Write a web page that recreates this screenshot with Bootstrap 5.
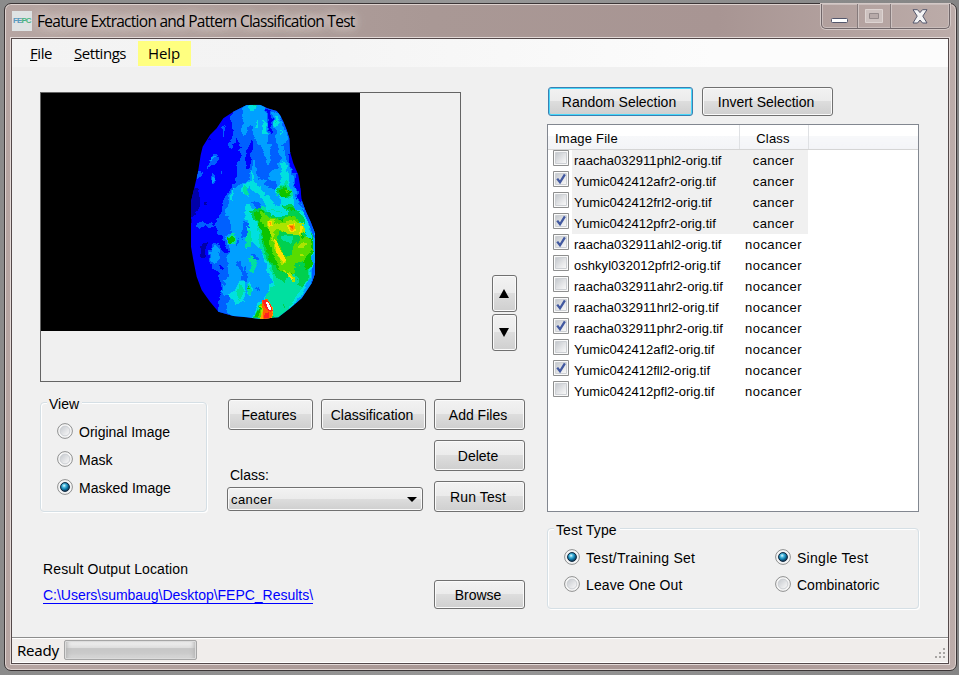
<!DOCTYPE html>
<html lang="en">
<head>
<meta charset="utf-8">
<title>Feature Extraction and Pattern Classification Test</title>
<link rel="stylesheet" href="https://cdn.jsdelivr.net/npm/bootstrap@5.3.0/dist/css/bootstrap.min.css">
<style>
html,body{height:100%}
body{background:linear-gradient(90deg,#8b8b8b,#979797 50%,#858585);font:14px/16px "Liberation Sans",Arial,sans-serif;color:#000;padding:3px 2px 4px 4px;overflow:hidden}
svg{display:block}
.win{height:668px;width:953px;border:1px solid #3b3536;border-radius:7px;box-shadow:inset 0 0 0 1px #ddd2cf;background:linear-gradient(90deg,#b6a5a2,#a99895 45%,#a89593 75%,#bcaca9)}
.segoe{font-family:"Noto Sans","Open Sans",sans-serif}
.titlebar{height:34px;padding:0 6px 0 7px}
.logo{width:20px;height:20px;background:#dfe3e4;color:#5898bd;font:700 8px/20px "Liberation Sans",Arial,sans-serif;letter-spacing:-.9px;padding-left:1px;white-space:nowrap}
.logo b{color:#44b37f}
.titletext{font-family:"Open Sans","Noto Sans",sans-serif;font-size:15.5px;letter-spacing:-.73px;margin-left:5px;padding-bottom:1px;white-space:nowrap;text-shadow:0 0 8px #e0d6d4,0 0 10px #e0d6d4,0 0 14px #d8cdca}
.caption{width:129px;height:25px;border:1px solid #71676a;border-top:0;border-radius:0 0 5px 5px;box-shadow:0 0 0 1px #d3c8c6,inset 0 0 0 1px #c9bdbb;margin-right:0}
.caption>div{height:24px;display:flex;align-items:center;justify-content:center}
.caption>div+div{border-left:1px solid #857a7b;box-shadow:inset 1px 0 #cfc4c2}
.client{margin:0 7px 0 6px;width:938px;height:626px;border:1px solid #54494a;box-shadow:0 0 0 1px #e3d9d7;background:#f0f0f0}
.menu{height:28px;font-family:"Open Sans","Noto Sans",sans-serif;font-size:15px;background:linear-gradient(90deg,#f3f3f3,#f4f4f4 30%,#fcfcfc 75%);padding-left:18px}
.menu a{color:#000;text-decoration:none;height:25px;line-height:25px;margin-top:2px;letter-spacing:-.45px}
.menu .m-file{width:44px}
.menu .m-set{width:64px}
.menu .hot{background:#ffff80;width:53px;padding-left:10px;letter-spacing:-.1px}
.body-area{height:570px;padding-left:28px;gap:22px}
.leftcol{width:485px;padding-top:25px}
.rightcol{width:372px;padding-top:20px}
.preview{width:421px;height:290px;border:1px solid #646464}
.arrows{margin:183px 0 0 31px;gap:2px}
.wbtn{--bs-btn-padding-x:0;--bs-btn-padding-y:0;border:1px solid #707070;border-radius:3px;background:linear-gradient(#f2f2f2,#ebebeb 49%,#dddddd 50%,#cfcfcf);box-shadow:inset 0 0 0 1px #fafafa;font-size:14px;line-height:16px;color:#000;height:31px;display:flex;align-items:center;justify-content:center;padding-right:3px;white-space:nowrap}
.wbtn:hover{color:#000}
.wbtn.focus-blue{border-color:#3c7fb1;box-shadow:inset 0 0 0 1px #48d8fb}
.wbtn.arrow{width:25px;height:37px;padding-right:1px}
.w91{width:91px}.w85{width:85px}.w105{width:105px}
.loose{letter-spacing:.12px}
.grp{border:1px solid #d5dfe5;border-radius:4px;box-shadow:1px 1px 0 #fff,inset 1px 1px 0 #fff}
.grp-title{display:table;background:#f0f0f0;line-height:16px;padding:0 3px 0 2px}
.opt{display:flex;align-items:center;gap:6px;white-space:nowrap;height:20px}
.opt svg{margin-top:-2px}
.combo{width:196px;height:24px;border:1px solid #707070;border-radius:3px;background:linear-gradient(#f2f2f2,#ebebeb 49%,#dddddd 50%,#cfcfcf);box-shadow:inset 0 0 0 1px #fafafa;padding:1px 5px 0 3px;font-size:13px;letter-spacing:.4px}
.filelist{height:388px;background:#fff;border:1px solid #828790}
.filelist table{table-layout:fixed;width:370px;font-size:13px;line-height:19px;border-collapse:collapse}
.filelist th{height:24px;padding:4px 0 0 7px;font-weight:400;border-right:1px solid #dfe1e4;border-bottom:1px solid #d5d5d5;background:linear-gradient(#fff 45%,#f7f8fa 46%,#f3f4f7);letter-spacing:.22px}
.filelist th:last-child{border-right:0}
.filelist td{height:21px;padding:1px 0 0 0;white-space:nowrap;letter-spacing:.04px}
.filelist td.cls,.filelist th.cls{text-align:center;padding-left:0}
.filelist th.cls{padding-right:1px}
.filelist td.cls{letter-spacing:.42px}
.filelist tr.sel td:nth-child(2),.filelist tr.sel td:nth-child(3){background:#f0f0f0}
.filelist td.chk{padding:0 0 5px 5px;vertical-align:middle}
.filelist td.nm{padding-left:2px}
.out-link{color:#00f;text-decoration:none;border-bottom:1px solid #00f;line-height:15px;letter-spacing:-.02px}
.status{height:26px;border-top:1px solid #8d8d8d;box-shadow:inset 0 1px #fff,inset 0 -1px #fff;background:#f0edeb;padding:0 1px 1px 5px;font-size:15px;letter-spacing:-.25px}
.pbar{width:133px;height:20px;border:1px solid #a5a5a5;border-radius:2px;background:linear-gradient(#f3f3f3,#dedede 38%,#c6c6c6 42%,#cbcbcb 70%,#dcdcdc);box-shadow:inset 0 0 0 1px #dcdcdc,inset 4px 0 4px -2px #b2b2b2,inset -4px 0 4px -2px #b2b2b2}
</style>
<script src="https://cdn.jsdelivr.net/npm/bootstrap@5.3.0/dist/js/bootstrap.bundle.min.js"></script>
</head>
<body>
<svg width="0" height="0" class="position-absolute">
 <defs>
  <linearGradient id="off" x1="0" y1="0" x2="1" y2="1"><stop offset="0" stop-color="#c3c7cc"/><stop offset=".6" stop-color="#e6e7e9"/><stop offset="1" stop-color="#fafafa"/></linearGradient>
  <radialGradient id="ball" cx=".4" cy=".35" r=".65"><stop offset="0" stop-color="#e8fbff"/><stop offset=".3" stop-color="#4ebce0"/><stop offset=".65" stop-color="#0d78a8"/><stop offset="1" stop-color="#123350"/></radialGradient>
  <symbol id="r0" viewBox="0 0 16 16"><circle cx="8" cy="8" r="7.4" fill="#f7f7f7" stroke="#8e8f8f"/><circle cx="8" cy="8" r="4.9" fill="url(#off)" stroke="#cdd0d4"/></symbol>
  <symbol id="r1" viewBox="0 0 16 16"><circle cx="8" cy="8" r="7.4" fill="#f7f7f7" stroke="#8e8f8f"/><circle cx="8" cy="8" r="5.3" fill="#c6d2da"/><circle cx="8" cy="8" r="4.4" fill="url(#ball)" stroke="#12293f"/></symbol>
  <symbol id="c0" viewBox="0 0 16 16"><path fill="#fafafa" stroke="#8e8f8f" d="M.5.5h15v15H.5z"/><path fill="url(#off)" stroke="#cdd0d4" d="M2.500 2.500h11v11h-11z"/></symbol>
  <symbol id="c1" viewBox="0 0 16 16"><use href="#c0"/><path fill="none" stroke="#4259a0" stroke-width="2.3" d="M4.200 7.600 7 11.300 11.900 3.400"/></symbol>
 </defs>
</svg>

<div class="win">
 <header class="titlebar segoe d-flex">
  <div class="d-flex align-items-center flex-grow-1">
   <div class="logo">FE<b>PC</b></div>
   <span class="titletext">Feature Extraction and Pattern Classification Test</span>
  </div>
  <div class="caption d-flex">
   <div style="width:35px"><svg width="17" height="16"><rect x=".5" y="10.500" width="16" height="4" rx="1" fill="#fff" stroke="#53576c"/></svg></div>
   <div style="width:33px"><svg width="18" height="14"><path fill="#cdc2c0" stroke="#ddd4d2" d="M.5.5h17v13H.5z"/><path fill="#b7aaa9" stroke="#948a8b" d="M4.500 4.500h9v5h-9z"/></svg></div>
   <div class="flex-grow-1"><svg width="16" height="15" viewBox="0 0 16 15"><path fill="#f4f4f5" stroke="#53576c" stroke-linejoin="round" d="M1 .7h4.500L8 3.600 10.500.7H15l-4.200 6.400L15 14h-4.500L8 11l-2.500 3H1l4.200-6.900z"/></svg></div>
  </div>
 </header>

 <div class="client d-flex flex-column">
  <nav class="menu segoe d-flex">
   <a href="#" class="m-file"><u>F</u>ile</a><a href="#" class="m-set"><u>S</u>ettings</a><a href="#" class="hot">Help</a>
  </nav>

  <main class="body-area d-flex">
   <section class="leftcol">
    <div class="d-flex">
     <div class="preview">
      <svg width="319" height="238" viewBox="-417 -6 957 714">
       <defs>
        <clipPath id="body"><path d="M200 30 240 29 262 40 290 48 300 60 310 80 320 105 328 130 330 170 340 205 355 240 360 270 365 315 380 355 392 380 405 415V535L395 565 365 610 330 640 295 667 240 672 200 667 160 663 115 650 90 620 65 585 50 545 40 495 33 455V320L45 270 55 225 62 180 68 155 90 120 110 100 130 70 160 50z"/></clipPath>
        <filter id="rough" x="-5%" y="-5%" width="110%" height="110%"><feTurbulence type="fractalNoise" baseFrequency=".05" numOctaves="3" seed="4"/><feDisplacementMap in="SourceGraphic" scale="20" xChannelSelector="R" yChannelSelector="G"/></filter>
       </defs>
       <path d="M-417-6H540V708H-417z"/>
       <g clip-path="url(#body)" shape-rendering="crispEdges">
        <path fill="#00f" d="M20 20H420V690H20z"/>
        <g filter="url(#rough)">
         <path fill="#0000a8" d="M30 285 52 280 60 310 58 340 46 345 30 385zM72 322h10v12H72zM70 440 80 445 74 485 64 490 62 465zM88 130h8v8h-8z"/>
         <path fill="#0060ff" d="M155 50 210 10 320 40 340 170 327 180 345 235 352 310 375 340 420 370V700H110L115 620 125 590 118 540 95 520 88 480 95 450 112 440 130 470 145 475 125 430 108 400 122 350 125 325 150 280 168 250 172 210 184 180 172 120 165 145 150 165 148 145 158 120zM100 175 113 180 108 205 80 220zM130 100 138 95 125 130zM92 240 102 235 108 260 95 270zM52 225 70 228 50 255zM125 225 131 240 126 250zM45 390 60 380 78 388 95 382 105 395 80 395 60 402z"/>
         <path fill="#00f" d="M262 42 272 45 276 85 271 125 266 100zM210 130 220 145 215 180 206 222 197 220 200 170zM328 175 338 205 350 250 345 240 330 215zM347 270 360 275 362 320 354 315zM118 510 130 512 125 525z"/>
         <path fill="#00a0ff" d="M195 15 250 15 260 55 266 120 262 140 274 150 270 185 262 210 253 180 240 145 222 125 215 95 203 92 195 125 184 115 185 70zM276 50 297 55 310 95 325 130 310 150 318 190 335 230 345 270 350 310 385 370 410 420V600L270 690 200 690 145 655 140 630 160 600 130 600 125 575 150 540 140 490 148 460 135 425 155 410 150 370 135 360 150 290 170 275 205 260 215 225 222 185 230 240 240 255 262 250 255 270 290 285 285 260 265 245 282 225 295 220 302 190 290 150 285 110zM92 465 105 450 120 465 115 500 98 505zM95 185 108 186 92 200zM140 348 152 345 150 370 140 365zM95 245h9v15h-9z"/>
         <path fill="#0060ff" d="M190 375 205 390 200 420 185 430zM210 320 240 325 250 345 225 340zM170 495 185 500 192 540 180 530zM195 510 205 540 198 565 185 550zM215 470 232 490 225 515zM225 575 238 572 236 590 228 588zM170 420 178 440 172 450zM230 355 237 380 230 400z"/>
         <path fill="#00e0e0" d="M202 40 215 15 236 15 228 45 212 50zM252 72 258 85 260 118 250 110 246 90zM283 62 293 68 298 90 290 98 282 90zM225 78 231 75 230 95 225 94zM296 105 304 105 302 120zM310 198 320 210 325 250 333 280 345 340 375 350 400 430 395 540 365 600 315 665 210 690 245 610 262 595 270 570 280 560 265 540 255 500 240 460 215 440 197 465 200 410 205 380 190 355 200 325 212 335 232 350 260 345 240 300 215 280 200 275 207 310 185 290 190 270 215 260 218 225 223 255 245 285 280 320 300 335 303 310 287 290 292 270 305 255 302 215zM153 290 161 280 158 320 150 310zM205 565 213 560 220 590 210 605 200 590zM165 590 180 555 192 560 195 620 165 625 145 600z"/>
         <path fill="#00e0a0" d="M210 20h25l-5 20zM286 70 292 72 290 86zM190 272 200 275 208 300 200 302zM220 350 248 335 265 345 350 345 372 370 360 430 400 430 390 550 350 600 320 660 215 690 250 610 285 565 262 500 240 460 235 400zM202 405 215 410 210 455 195 460zM212 480 228 500 225 535 210 520zM150 415 165 410 170 445 145 450zM300 270 315 255 325 265 340 300 330 310 295 300zM200 570 214 568 215 600 205 600zM180 570 190 590 180 620 170 600z"/>
         <path fill="#00d050" d="M205 350 240 338 260 350 355 345 375 380 365 400 400 420 385 550 365 580 345 535 310 560 285 540 270 510 250 460 240 390zM292 282 315 270 330 290 325 308 298 300zM310 335 340 330 360 350 340 365zM225 670 255 605 275 640 285 680zM305 625 315 630 310 645zM365 530 380 540 372 575zM205 578 211 578 208 592z"/>
         <path fill="#10c400" d="M226 20 235 20 230 36zM145 430 165 423 163 443 150 450zM296 286 318 278 330 290 325 305 302 302zM225 355 245 345 260 365 290 375 340 365 370 390 370 420 400 430 395 510 380 530 365 485 330 540 300 530 270 500 255 455 240 400zM320 340 340 335 350 348 330 350zM230 665 250 615 270 630 280 680zM205 575 210 585 206 588z"/>
         <path fill="#58dc00" d="M240 350 265 365 300 375 345 365 370 395 365 430 385 420 395 460 375 490 345 515 340 540 325 530 300 530 285 490 265 450 275 410 245 385zM310 288 326 288 324 300zM235 670 245 625 265 620 275 680z"/>
         <path fill="#00d050" d="M298 410 355 415 365 435 340 450 335 480 318 485 300 450 290 430z"/>
         <path fill="#00e0a0" d="M300 425 340 422 335 440 310 440z"/>
         <path fill="#00e0e0" d="M255 350 320 345 325 360 290 367zM355 380 390 400 398 440 385 430 370 400z"/>
         <path fill="#ace400" d="M260 375 280 370 290 390 310 380 340 378 370 390 372 410 355 425 330 415 300 405 288 400 278 430 300 465 318 500 310 515 290 480 278 440 265 405zM355 450 375 440 380 452 362 462zM355 475 370 475 368 488zM310 525 325 530 350 555 345 565 325 545zM240 675 245 630 262 615 275 640 272 680z"/>
        </g>
        <path fill="#ffe000" d="M262 377 276 378 278 393 266 395zM320 390 345 385 347 408 330 412zM362 392 370 395 365 412 357 418zM282 430 290 440 302 465 318 495 312 505 290 475zM318 530 340 550 335 555zM240 672 252 640 246 618 260 615 278 645 276 675z"/>
        <path fill="#ff9d00" d="M326 390 343 388 345 402 333 410zM266 380 272 380 272 390zM248 650 247 615 262 612 280 640V660L270 675 240 675z"/>
        <path fill="#ff6000" d="M330 392 340 392 337 405zM246 615 262 612 272 628 278 655 272 675 250 675z"/>
        <path fill="#ff2020" d="M248 614 262 616 276 637 278 648 270 650 257 640 250 625zM254 656 266 652 266 675 252 675z"/>
        <path fill="#f4ffff" d="M257 620 264 622 273 637 273 646 265 642z"/>
        <path fill="#005cff" d="M365 340 378 350 400 402 406 430 400 425 388 390zM405 500 398 515 394 565 406 540z"/>
       </g>
      </svg>
     </div>
     <div class="arrows d-flex flex-column">
      <button class="btn wbtn arrow"><svg width="10" height="9"><path d="M5 0 10 9H0z"/></svg></button>
      <button class="btn wbtn arrow"><svg width="10" height="9"><path d="M5 9 10 0H0z"/></svg></button>
     </div>
    </div>

    <div class="d-flex" style="padding-top:17px;height:131px">
     <div class="grp" style="width:167px;height:110px;margin-top:3px">
      <div class="grp-title" style="margin:-7px 0 0 6px">View</div>
      <div style="padding:10px 0 0 16px">
       <div class="opt mb-2"><svg width="16" height="16"><use href="#r0"/></svg>Original Image</div>
       <div class="opt mb-2"><svg width="16" height="16"><use href="#r0"/></svg>Mask</div>
       <div class="opt"><svg width="16" height="16"><use href="#r1"/></svg>Masked Image</div>
      </div>
     </div>
     <div style="margin-left:20px;width:199px">
      <div class="d-flex gap-2" style="margin-left:1px"><button class="btn wbtn w85">Features</button><button class="btn wbtn w105">Classification</button></div>
      <div style="margin:37px 0 4px 3px;height:16px">Class:</div>
      <div class="combo d-flex align-items-center justify-content-between"><span>cancer</span><svg width="10" height="5"><path d="M0 0h10L5 5z"/></svg></div>
     </div>
     <div class="d-flex flex-column" style="gap:10px;margin-left:8px">
      <button class="btn wbtn w91">Add Files</button><button class="btn wbtn w91">Delete</button><button class="btn wbtn w91 loose">Run Test</button>
     </div>
    </div>

    <div class="d-flex justify-content-between" style="padding:48px 0 0 3px">
     <div><div class="loose" style="margin-bottom:10px">Result Output Location</div><a href="#" class="out-link">C:\Users\sumbaug\Desktop\FEPC_Results\</a></div>
     <button class="btn wbtn w91" style="height:29px;margin-top:19px">Browse</button>
    </div>
   </section>

   <section class="rightcol">
    <div class="d-flex" style="gap:9px;padding:0 0 8px 1px">
     <button class="btn wbtn focus-blue" style="width:145px;height:29px">Random Selection</button>
     <button class="btn wbtn" style="width:131px;height:29px">Invert Selection</button>
    </div>
    <div class="filelist">
     <table>
      <colgroup><col style="width:24px"><col style="width:167px"><col style="width:69px"><col></colgroup>
      <thead><tr><th colspan="2">Image File</th><th class="cls">Class</th><th></th></tr></thead>
      <tbody>
       <tr class="sel"><td class="chk"><svg width="16" height="16"><use href="#c0"/></svg></td><td class="nm">raacha032911phl2-orig.tif</td><td class="cls">cancer</td><td></td></tr>
       <tr class="sel"><td class="chk"><svg width="16" height="16"><use href="#c1"/></svg></td><td class="nm">Yumic042412afr2-orig.tif</td><td class="cls">cancer</td><td></td></tr>
       <tr class="sel"><td class="chk"><svg width="16" height="16"><use href="#c0"/></svg></td><td class="nm">Yumic042412frl2-orig.tif</td><td class="cls">cancer</td><td></td></tr>
       <tr class="sel"><td class="chk"><svg width="16" height="16"><use href="#c1"/></svg></td><td class="nm">Yumic042412pfr2-orig.tif</td><td class="cls">cancer</td><td></td></tr>
       <tr><td class="chk"><svg width="16" height="16"><use href="#c1"/></svg></td><td class="nm">raacha032911ahl2-orig.tif</td><td class="cls">nocancer</td><td></td></tr>
       <tr><td class="chk"><svg width="16" height="16"><use href="#c0"/></svg></td><td class="nm">oshkyl032012pfrl2-orig.tif</td><td class="cls">nocancer</td><td></td></tr>
       <tr><td class="chk"><svg width="16" height="16"><use href="#c0"/></svg></td><td class="nm">raacha032911ahr2-orig.tif</td><td class="cls">nocancer</td><td></td></tr>
       <tr><td class="chk"><svg width="16" height="16"><use href="#c1"/></svg></td><td class="nm">raacha032911hrl2-orig.tif</td><td class="cls">nocancer</td><td></td></tr>
       <tr><td class="chk"><svg width="16" height="16"><use href="#c1"/></svg></td><td class="nm">raacha032911phr2-orig.tif</td><td class="cls">nocancer</td><td></td></tr>
       <tr><td class="chk"><svg width="16" height="16"><use href="#c0"/></svg></td><td class="nm">Yumic042412afl2-orig.tif</td><td class="cls">nocancer</td><td></td></tr>
       <tr><td class="chk"><svg width="16" height="16"><use href="#c1"/></svg></td><td class="nm">Yumic042412fll2-orig.tif</td><td class="cls">nocancer</td><td></td></tr>
       <tr><td class="chk"><svg width="16" height="16"><use href="#c0"/></svg></td><td class="nm">Yumic042412pfl2-orig.tif</td><td class="cls">nocancer</td><td></td></tr>
      </tbody>
     </table>
    </div>
    <div class="grp" style="height:81px;margin-top:16px">
     <div class="grp-title loose" style="margin:-7px 0 0 6px">Test Type</div>
     <div class="d-flex loose" style="padding:10px 0 0 16px">
      <div style="width:211px"><div class="opt" style="margin-bottom:7px;letter-spacing:.28px"><svg width="16" height="16"><use href="#r1"/></svg>Test/Training Set</div><div class="opt"><svg width="16" height="16"><use href="#r0"/></svg>Leave One Out</div></div>
      <div><div class="opt" style="margin-bottom:7px;letter-spacing:.28px"><svg width="16" height="16"><use href="#r1"/></svg>Single Test</div><div class="opt" style="letter-spacing:0"><svg width="16" height="16"><use href="#r0"/></svg>Combinatoric</div></div>
     </div>
    </div>
   </section>
  </main>

  <footer class="status segoe d-flex align-items-center">
   <span style="width:47px">Ready</span><div class="pbar"></div>
   <svg class="ms-auto align-self-end" width="12" height="14"><path fill="#a8a5a3" d="M8 0h2v2H8zM4 4h2v2H4zM8 4h2v2H8zM0 8h2v2H0zM4 8h2v2H4zM8 8h2v2H8z"/></svg>
  </footer>
 </div>
</div>
</body>
</html>
